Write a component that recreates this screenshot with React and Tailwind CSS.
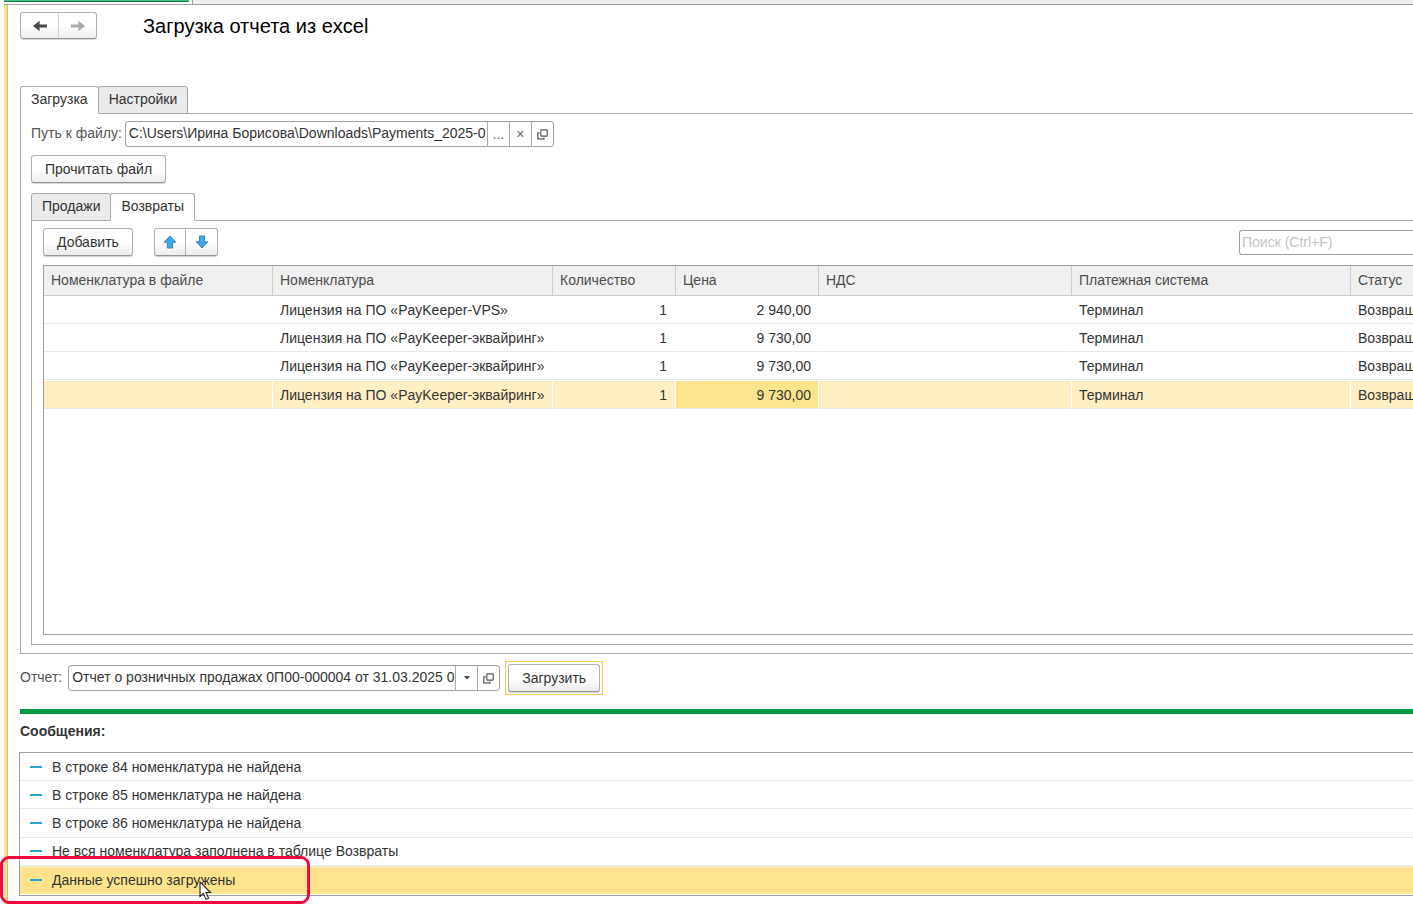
import clsx from "clsx";

const COLUMNS = [
  { title: "Номенклатура в файле", width: "w-[229px]" },
  { title: "Номенклатура", width: "w-[280px]" },
  { title: "Количество", width: "w-[123px]" },
  { title: "Цена", width: "w-[143px]" },
  { title: "НДС", width: "w-[253px]" },
  { title: "Платежная система", width: "w-[279px]" },
  { title: "Статус", width: "w-auto" },
];

const ROWS = [
  ["", "Лицензия на ПО «PayKeeper-VPS»", "1", "2 940,00", "", "Терминал", "Возвращ"],
  ["", "Лицензия на ПО «PayKeeper-эквайринг»", "1", "9 730,00", "", "Терминал", "Возвращ"],
  ["", "Лицензия на ПО «PayKeeper-эквайринг»", "1", "9 730,00", "", "Терминал", "Возвращ"],
  ["", "Лицензия на ПО «PayKeeper-эквайринг»", "1", "9 730,00", "", "Терминал", "Возвращ"],
];

const SELECTED_ROW = 3;
const SELECTED_COL = 3;

const MESSAGES = [
  "В строке 84 номенклатура не найдена",
  "В строке 85 номенклатура не найдена",
  "В строке 86 номенклатура не найдена",
  "Не вся номенклатура заполнена в таблице Возвраты",
  "Данные успешно загружены",
];

const BUTTON =
  "rounded-[3px] border border-[#b0b0b0] border-b-[#969696] bg-linear-to-b from-white from-50% to-[#ececec] shadow-[0_1px_1px_rgba(0,0,0,0.18)]";

function NavArrow({ flip, color }) {
  return (
    <svg width="16" height="12" viewBox="0 0 16 12" className={flip ? "-scale-x-100" : ""}>
      <path
        d="M15 4.6V7.4H7.6V11.2L1 6L7.6 0.8V4.6Z"
        fill={color}
      />
    </svg>
  );
}

function MoveArrow({ down }) {
  return (
    <svg width="14" height="14" viewBox="0 0 14 14" className={down ? "rotate-180" : ""}>
      <path
        d="M7 1L12.8 7.2H9.6V13H4.4V7.2H1.2Z"
        fill="#3fa9f0"
        stroke="#3f7fae"
        strokeWidth="1"
        strokeLinejoin="round"
      />
    </svg>
  );
}

function OpenIcon() {
  return (
    <svg width="11" height="11" viewBox="0 0 11 11" fill="none" stroke="#555" strokeWidth="1.2">
      <rect x="3.8" y="0.8" width="6.4" height="6.4" rx="0.6" />
      <path d="M2.6 3.8H0.8V9.8H7V8.4" />
    </svg>
  );
}

function Tab({ active, children }) {
  return (
    <button
      type="button"
      role="tab"
      aria-selected={active}
      className={clsx(
        "h-7 rounded-t-[3px] border border-[#aaa] px-[10px] pb-[2px]",
        active ? "border-b-white bg-white" : "bg-[#ebebeb]"
      )}
    >
      {children}
    </button>
  );
}

function FieldButton({ label, children }) {
  return (
    <button
      type="button"
      aria-label={label}
      className="flex w-[22px] items-center justify-center border-l border-[#aaa] text-[#666]"
    >
      {children}
    </button>
  );
}

function Field({ id, value, width, children }) {
  return (
    <div className="flex h-[26px] overflow-hidden rounded-[3px] border border-[#a0a0a0] bg-white">
      <input id={id} defaultValue={value} className={clsx("pb-[2px] pl-[3px] outline-none", width)} />
      {children}
    </div>
  );
}

function ItemsTable() {
  return (
    <div className="h-[370px] overflow-hidden border border-r-0 border-[#a0a0a0]">
      <table className="w-full table-fixed border-separate border-spacing-0">
        <thead>
          <tr className="h-[30px] bg-[#f0f0f0] text-left text-[#4d4d4d]">
            {COLUMNS.map((col) => (
              <th
                key={col.title}
                className={clsx(
                  "border-r border-b border-[#ccc] p-0 pb-[2px] pl-[7px] font-normal last:border-r-0",
                  col.width
                )}
              >
                {col.title}
              </th>
            ))}
          </tr>
        </thead>
        <tbody>
          {ROWS.map((row, r) => (
            <tr
              key={r}
              className={clsx(r === SELECTED_ROW ? "h-[29px] bg-[#ffefc3]" : "h-[28px]")}
            >
              {row.map((cell, c) => (
                <td
                  key={c}
                  className={clsx(
                    "border-r border-b border-b-[#e8e8e8] p-0 pl-[7px] whitespace-nowrap last:border-r-0",
                    r === SELECTED_ROW ? "border-t border-t-white border-r-white" : "border-r-transparent",
                    c === 2 && "pr-2 text-right",
                    c === 3 && "pr-[7px] text-right",
                    r === SELECTED_ROW && c === SELECTED_COL && "bg-[#fbe48b]"
                  )}
                >
                  {cell}
                </td>
              ))}
            </tr>
          ))}
        </tbody>
      </table>
    </div>
  );
}

function Messages() {
  return (
    <ul className="-ml-px flex h-36 flex-col border border-r-0 border-[#a0a0a0]">
      {MESSAGES.map((text, i) => {
        const last = i === MESSAGES.length - 1;
        return (
          <li
            key={text}
            className={clsx(
              "relative flex flex-1 items-center gap-[10px] pl-[10px]",
              last ? "border-y border-t-[#eee] border-b-white bg-[#fee38c]" : "border-b border-[#e8e8e8]"
            )}
          >
            <span className="h-[2px] w-3 bg-[#30a0cf]" />
            {text}
            {last && (
              <>
                <span className="absolute -top-[11px] -left-5 h-12 w-[310px] rounded-[9px] border-3 border-[#f5063f]" />
                <svg
                  className="absolute top-[14px] left-[179px]"
                  width="14"
                  height="20"
                  viewBox="0 0 14 20"
                >
                  <path
                    d="M1 1V15.5L4.4 12.4L7 18.4L9.6 17.3L7 11.5H11.6Z"
                    fill="#fff"
                    stroke="#222"
                    strokeWidth="1.1"
                  />
                </svg>
              </>
            )}
          </li>
        );
      })}
    </ul>
  );
}

export default function App() {
  return (
    <div className="overflow-hidden bg-white pl-1 font-['Liberation_Sans',Arial,sans-serif] text-[14px] leading-[18px] text-[#333]">
      {/* Window tabs */}
      <div className="flex h-[5px] border-b border-[#a0a0a0]">
        <div className="h-[2px] w-[185px] border-b border-[#0b7a40] bg-[#4cc486]" />
        <div className="ml-[3px] flex-1 border-l border-[#a0a0a0] bg-[#eee]" />
      </div>

      <div className="border-l-3 border-[#fbe08a]">
        <main className="border-l border-[#c9b98a] pb-2 pl-3">
          <header className="flex items-center gap-[46px] pt-[7px]">
            <div className={clsx("flex h-[27px] w-[77px]", BUTTON)}>
              <button
                type="button"
                aria-label="Назад"
                className="flex flex-1 items-center justify-center border-r border-[#d0d0d0]"
              >
                <NavArrow color="#4a4a4a" />
              </button>
              <button
                type="button"
                aria-label="Вперед"
                className="flex flex-1 items-center justify-center"
              >
                <NavArrow flip color="#aaa" />
              </button>
            </div>
            <h1 className="text-[20px] leading-6 text-black">Загрузка отчета из excel</h1>
          </header>

          {/* Upload panel */}
          <div role="tablist" className="mt-[47px] flex -space-x-px">
            <Tab active>Загрузка</Tab>
            <Tab>Настройки</Tab>
          </div>
          <section className="-mt-px border border-r-0 border-[#aaa] pt-[7px] pb-2 pl-[10px]">
            <div className="flex items-center gap-[3px]">
              <label htmlFor="path" className="pb-[2px] text-[#555]">
                Путь к файлу:
              </label>
              <Field
                id="path"
                width="w-[361px]"
                value="C:\Users\Ирина Борисова\Downloads\Payments_2025-0"
              >
                <FieldButton label="Выбрать">...</FieldButton>
                <FieldButton label="Очистить">×</FieldButton>
                <FieldButton label="Открыть">
                  <OpenIcon />
                </FieldButton>
              </Field>
            </div>
            <button type="button" className={clsx("mt-2 block h-7 px-[13px]", BUTTON)}>
              Прочитать файл
            </button>

            <div role="tablist" className="mt-[10px] flex -space-x-px">
              <Tab>Продажи</Tab>
              <Tab active>Возвраты</Tab>
            </div>
            <div className="-mt-px border border-r-0 border-[#aaa] pt-[7px] pb-[9px] pl-[11px]">
              <div className="mb-[9px] flex items-center">
                <button type="button" className={clsx("h-7 px-[13px]", BUTTON)}>
                  Добавить
                </button>
                <div className={clsx("ml-[21px] flex h-7 w-16", BUTTON)}>
                  <button
                    type="button"
                    aria-label="Вверх"
                    className="flex flex-1 items-center justify-center border-r border-[#b0b0b0]"
                  >
                    <MoveArrow />
                  </button>
                  <button
                    type="button"
                    aria-label="Вниз"
                    className="flex flex-1 items-center justify-center"
                  >
                    <MoveArrow down />
                  </button>
                </div>
                <input
                  aria-label="Поиск"
                  placeholder="Поиск (Ctrl+F)"
                  className="ml-auto h-[25px] w-[174px] rounded-l-[3px] border border-r-0 border-[#a0a0a0] px-[2px] placeholder:text-[#c4c4c4]"
                />
              </div>
              <ItemsTable />
            </div>
          </section>

          {/* Report */}
          <div className="mt-[7px] flex items-center">
            <label htmlFor="report" className="mr-[6px] pb-[2px] text-[#555]">
              Отчет:
            </label>
            <Field
              id="report"
              width="w-[386px]"
              value="Отчет о розничных продажах 0П00-000004 от 31.03.2025 0"
            >
              <FieldButton label="Список">
                <svg width="6" height="4" viewBox="0 0 6 4">
                  <path d="M0 0H6L3 3.6Z" fill="#444" />
                </svg>
              </FieldButton>
              <FieldButton label="Открыть">
                <OpenIcon />
              </FieldButton>
            </Field>
            <div className="ml-[5px] border border-[#f0cf4e] p-[2px]">
              <button type="button" className={clsx("block h-7 px-[13px]", BUTTON)}>
                Загрузить
              </button>
            </div>
          </div>

          <div className="mt-[14px] h-[5px] bg-[#009a49]" />
          <h2 className="mt-2 mb-3 font-bold">Сообщения:</h2>
          <Messages />
        </main>
      </div>
    </div>
  );
}
